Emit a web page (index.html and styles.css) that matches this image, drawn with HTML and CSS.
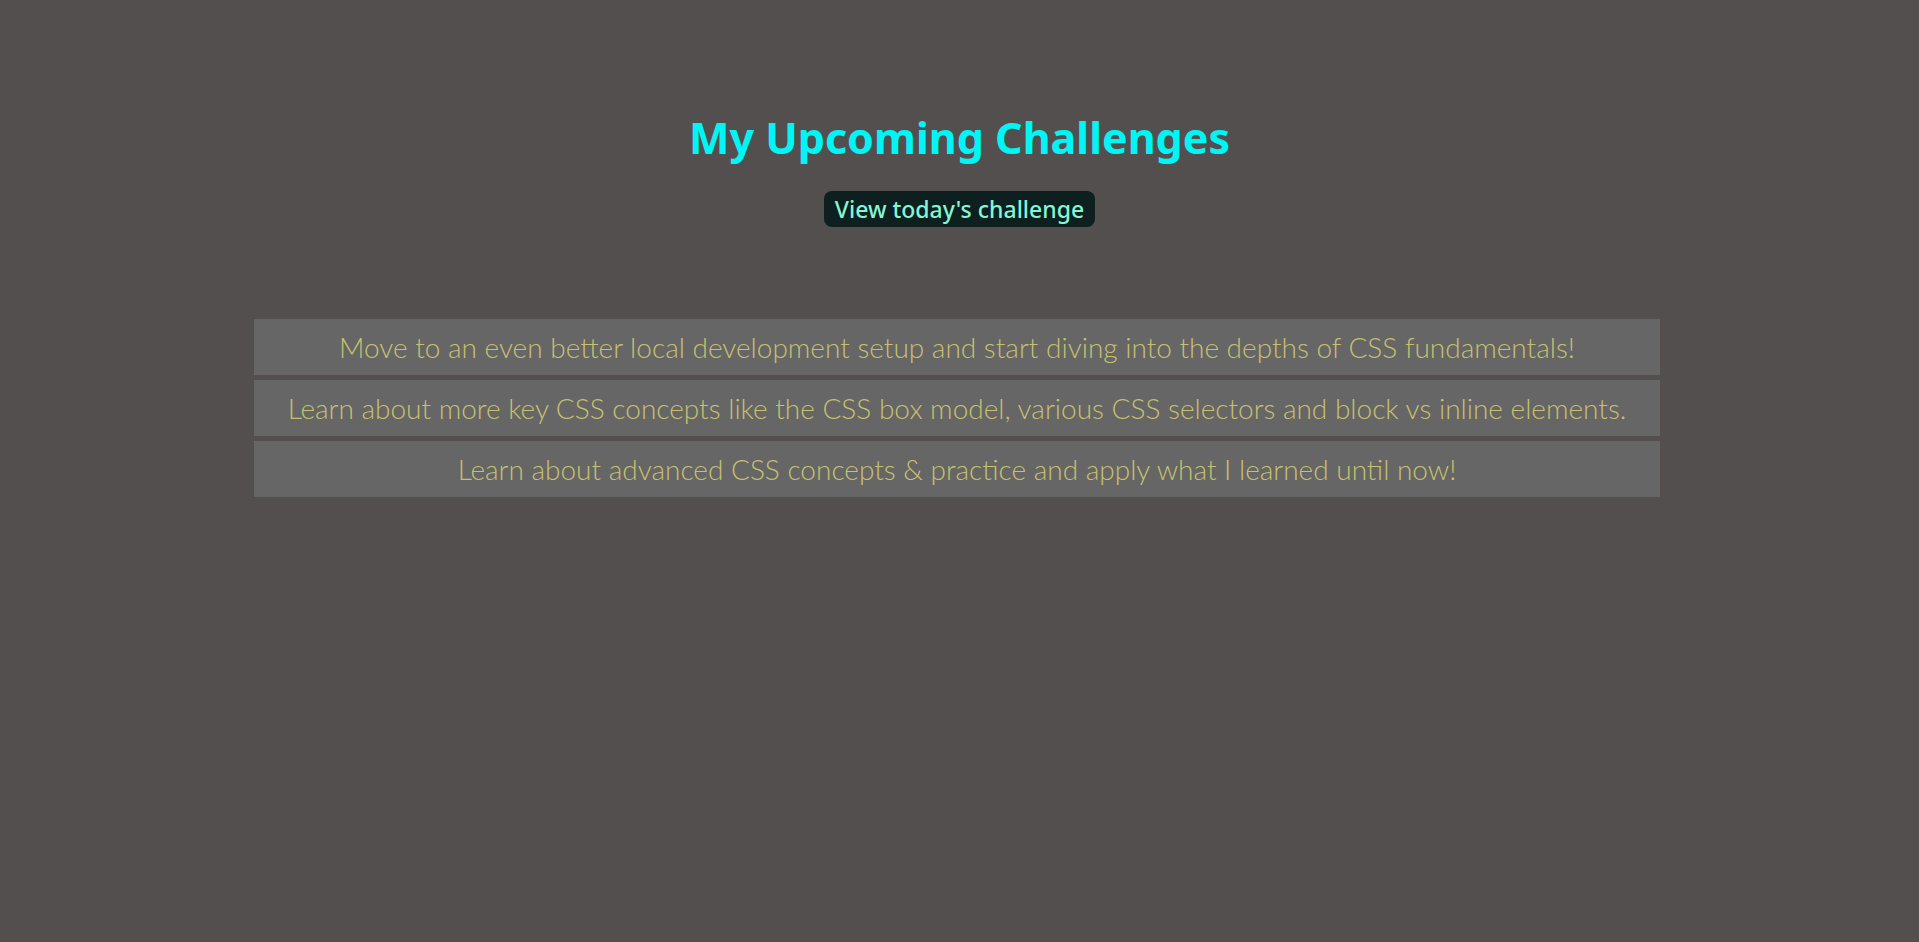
FILE: index.html
```html
<!DOCTYPE html>
<html lang="en">
<head>
<meta charset="utf-8">
<title>My Upcoming Challenges</title>
<link rel="stylesheet" href="styles.css">
</head>
<body>
<header class="hero">
  <h1 class="title">My Upcoming Challenges</h1>
  <a class="cta" href="#">View today's challenge</a>
</header>
<main class="content">
  <ul class="goals">
    <li class="goal">Move to an even better local development setup and start diving into the depths of CSS fundamentals!</li>
    <li class="goal">Learn about more key CSS concepts like the CSS box model, various CSS selectors and block vs inline elements.</li>
    <li class="goal">Learn about advanced CSS concepts &amp; practice and apply what I learned until now!</li>
  </ul>
</main>
</body>
</html>
```
FILE: styles.css
```css
html, body {
  margin: 0;
  padding: 0;
}
body {
  background: #534f4f;
  min-height: 942px;
  font-family: "Noto Sans", "Open Sans", sans-serif;
}
.hero {
  display: flex;
  flex-direction: column;
  align-items: center;
  padding-top: 110px;
}
.title {
  margin: 0;
  font-family: "Noto Sans", sans-serif;
  font-weight: 700;
  font-size: 43px;
  line-height: 56px;
  color: #00f5f5;
}
.cta {
  margin-top: 25px;
  display: inline-block;
  height: 36px;
  line-height: 36px;
  padding: 0 11px;
  border-radius: 8px;
  background: #0d1f1f;
  color: #86f5d2;
  font-size: 23px;
  font-weight: 500;
  text-decoration: none;
}
.content {
  padding-right: 5px;
}
.goals {
  list-style: none;
  width: 1406px;
  margin: 92px auto 0;
  padding: 0;
  display: flex;
  flex-direction: column;
  gap: 5px;
}
.goal {
  height: 56px;
  display: flex;
  align-items: center;
  justify-content: center;
  background: #666666;
  color: #c6c16e;
  font-family: "Lato", sans-serif;
  font-weight: 300;
  font-size: 28px;
}
```
